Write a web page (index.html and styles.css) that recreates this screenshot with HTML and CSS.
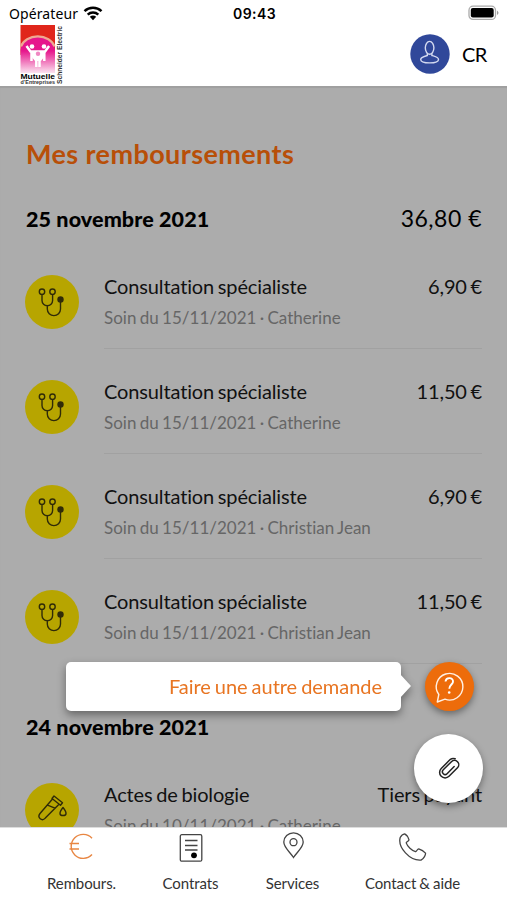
FILE: index.html
```html
<!DOCTYPE html>
<html lang="fr">
<head>
<meta charset="utf-8">
<title>Mes remboursements</title>
<link rel="stylesheet" href="styles.css">
</head>
<body>
<svg width="0" height="0" class="defs">
  <symbol id="stethoscope" viewBox="0 0 54 54">
    <g fill="none" stroke="currentColor" stroke-width="1.4">
      <circle cx="17" cy="16.700" r="2.700"/><circle cx="27.500" cy="16.700" r="2.700"/>
      <path d="M17 19.400v6a5.300 5.300 0 0 0 10.600 0v-6M22.300 31v3a6.600 6.600 0 0 0 13.200 0V25"/>
    </g>
    <circle cx="35.500" cy="24.500" r="3.200" fill="currentColor"/>
  </symbol>
</svg>
<div class="screen">
  <header class="top">
    <div class="status">
      <div class="carrier"><span>Opérateur</span>
        <svg width="20" height="15" viewBox="0 0 20 15"><g fill="none" stroke="#000" stroke-width="2.500"><path d="M1.500 5.200a12.500 12.500 0 0 1 17 0M4.700 8.600a7.800 7.800 0 0 1 10.600 0"/></g><path d="M6.800 10.800a5 5 0 0 1 6.400 0L10 14.200z"/></svg>
      </div>
      <time>09:43</time>
      <svg class="battery" width="32" height="16" viewBox="0 0 32 16"><rect x="1" y="1.200" width="26.500" height="13.200" rx="4" fill="#fff" stroke="#aaa" stroke-width="1.300"/><rect x="2.800" y="3" width="22.900" height="9.600" rx="2" /><path d="M29 5.500v4.600q3-2.300 0-4.600z" fill="#999"/></svg>
    </div>
    <div class="brandbar">
      <svg class="logo" width="46" height="62" viewBox="0 0 46 62">
        <defs><linearGradient id="pink" x2="0" y2="1"><stop offset=".4" stop-color="#e6168c"/><stop offset="1" stop-color="#fbe3f0"/></linearGradient></defs>
        <rect x="1.500" y="0" width="34.500" height="30" fill="#e0261b"/>
        <path d="M1.500 48V25a17.300 15 0 0 1 34.500 0v23z" fill="url(#pink)"/>
        <path d="M2 21.500a17.300 13.500 0 0 1 33.500 0" fill="none" stroke="#eea993" stroke-width="2.200"/>
        <g fill="#fff"><circle cx="13" cy="21.500" r="2.300"/><circle cx="25" cy="21.500" r="2.300"/></g>
        <path d="M7.500 21l4 5.500h14.600l4-5.500M12.500 26v10M25.300 26v10M17.300 34v8M20.500 34v8" fill="none" stroke="#fff" stroke-width="2.500"/>
        <path d="M12 26h14v5l-4 5h-6l-4-5z" fill="#fff"/><circle cx="19" cy="28.800" r="2.200" fill="#f087c2"/>
        <text x="1.500" y="54" font-size="6.500" textLength="34.500" lengthAdjust="spacingAndGlyphs" class="logo-name">Mutuelle</text>
        <text x="1.500" y="59.300" font-size="6.200" textLength="34.500" lengthAdjust="spacingAndGlyphs" class="logo-text">d’Entreprises</text>
        <text transform="translate(43 59) rotate(-90)" font-size="6.500" textLength="58" lengthAdjust="spacingAndGlyphs" class="logo-text">Schneider Electric</text>
      </svg>
      <div class="user">
        <svg width="40" height="40" viewBox="0 0 40 40"><circle cx="20" cy="20" r="19.700" fill="#30489a"/><g fill="none" stroke="#d4daf0" stroke-width="1.400"><ellipse cx="19.600" cy="13.800" rx="4.300" ry="6.400"/><path d="M17.300 19.300v2.200c-3.500 1-6.600 1.700-6.600 3.900 0 4.600 17.800 4.600 17.800 0 0-2.200-3-2.900-6.600-3.900v-2.200"/></g></svg>
        <span>CR</span>
      </div>
    </div>
  </header>
  <main class="content">
    <h1>Mes remboursements</h1>
    <section>
      <div class="day"><h2>25 novembre 2021</h2><span class="total">36,80 €</span></div>
      <article class="row"><svg class="badge"><use href="#stethoscope"/></svg><div class="detail"><div class="line"><h3>Consultation spécialiste</h3><span class="amount">6,90 €</span></div><p>Soin du 15/11/2021 · Catherine</p></div></article>
      <article class="row"><svg class="badge"><use href="#stethoscope"/></svg><div class="detail"><div class="line"><h3>Consultation spécialiste</h3><span class="amount">11,50 €</span></div><p>Soin du 15/11/2021 · Catherine</p></div></article>
      <article class="row"><svg class="badge"><use href="#stethoscope"/></svg><div class="detail"><div class="line"><h3>Consultation spécialiste</h3><span class="amount">6,90 €</span></div><p>Soin du 15/11/2021 · Christian Jean</p></div></article>
      <article class="row"><svg class="badge"><use href="#stethoscope"/></svg><div class="detail"><div class="line"><h3>Consultation spécialiste</h3><span class="amount">11,50 €</span></div><p>Soin du 15/11/2021 · Christian Jean</p></div></article>
    </section>
    <section class="next">
      <div class="day"><h2>24 novembre 2021</h2></div>
      <article class="row"><svg class="badge" viewBox="0 0 54 54"><g fill="none" stroke="currentColor" stroke-width="1.400" stroke-linejoin="round"><path d="M27 15.500l2-2.500 8.500 6.700-2 2.500zM27.500 16L15 30.500c-3.200 4.200 2 8.200 5.300 4.600L34 21.200M22.500 22.200l7.500 3"/><path d="M38 24.500c-4.500 5.500-3.500 8 0 8s4.500-2.500 0-8z"/></g></svg><div class="detail"><div class="line"><h3>Actes de biologie</h3><span class="amount">Tiers payant</span></div><p>Soin du 10/11/2021 · Catherine</p></div></article>
    </section>
    <div class="tip">Faire une autre demande</div>
    <button class="help" aria-label="Aide"><svg width="49" height="49" viewBox="0 0 49 49"><path d="M12.300 40l1.500-7.500A13.300 13.300 0 1 1 20 37.200z" fill="none" stroke="#fff0e4" stroke-width="1.400" stroke-linejoin="round"/><path d="M20.500 19.500c.5-4.800 8-4.300 7.500.3-.3 2.700-3.600 3-3.700 7" fill="none" stroke="#fff" stroke-width="1.900"/><circle cx="24.200" cy="30.500" r="1.300" fill="#fff"/></svg></button>
    <button class="attach" aria-label="Joindre"><svg width="69" height="69" viewBox="0 0 69 69"><path transform="translate(35 34.500) rotate(45)" d="M-5.500-5V5.500a5.500 5.500 0 0 0 11 0V-6.500a4.300 4.300 0 0 0-8.600 0V5a2.700 2.700 0 0 0 5.400 0V-5M-5.500-5V-7.500a7.500 5.500 0 0 1 3-3.700" fill="none" stroke="#222" stroke-width="1.500" stroke-linecap="round"/></svg></button>
  </main>
  <nav class="tabs">
    <a class="tab active"><svg width="30" height="32" viewBox="0 0 30 32"><path d="M25 8.200A12 12 0 1 0 25 24.500M2.500 13.500h9.500M2.500 19h9.500" fill="none" stroke="currentColor" stroke-width="1.400"/></svg><span>Rembours.</span></a>
    <a class="tab"><svg width="30" height="32" viewBox="0 0 30 32"><g fill="none" stroke="currentColor" stroke-width="1.300"><rect x="4.300" y="4.700" width="21.500" height="26.500" rx="1.500"/><path d="M9 10.500h12.500M9 15.500h12.500M9 20h12.500"/></g><circle cx="18" cy="25.300" r="2.900"/></svg><span>Contrats</span></a>
    <a class="tab"><svg width="30" height="32" viewBox="0 0 30 32"><g fill="none" stroke="currentColor" stroke-width="1.300"><path d="M15.500 27.500C12 22 5.800 17.500 5.800 12a9.700 9.200 0 0 1 19.400 0c0 5.500-6.200 10-9.700 15.500z"/><circle cx="15.500" cy="12.200" r="3.500"/></g></svg><span>Services</span></a>
    <a class="tab"><svg width="30" height="32" viewBox="0 0 30 32"><path d="M2.200 7.500c1-2 3-3.400 4.500-3.600 2 1 3.500 3.500 4.300 6-.3 1.500-2.400 1.700-2.800 3 1.300 3.800 5.500 7.600 9.300 8.800 1.500-.5 1.700-2.700 3.200-2.800 2.500.8 5 2.200 6.800 4.200.3 1.700-1.500 5.500-4.500 7C12 31-.5 17.500 2.200 7.500z" fill="none" stroke="currentColor" stroke-width="1.300"/></svg><span>Contact &amp; aide</span></a>
  </nav>
</div>
</body>
</html>
```

FILE: styles.css
```css
* { box-sizing: border-box; margin: 0; }
body { font-family: Lato, sans-serif; color: #000; font-variant-ligatures: none; }
svg { display: block; flex: none; }
.defs { position: absolute; }
.screen { width: 507px; height: 900px; display: flex; flex-direction: column; overflow: hidden; background: #fff; }
.top { height: 86px; flex: none; }
.status { height: 25px; padding: 2px 7px 0 9px; display: grid; grid-template-columns: 1fr auto 1fr; align-items: center; font-family: Inter, sans-serif; font-size: 14px; }
.carrier { display: flex; align-items: center; gap: 5px; font-family: "Noto Sans", sans-serif; letter-spacing: .1px; }
.status time { font-weight: 600; letter-spacing: .4px; }
.battery { justify-self: end; margin-top: -1px; }
.brandbar { display: flex; justify-content: space-between; padding: 0 20px 0 19px; }
.logo-name { font-family: "Liberation Sans", sans-serif; font-weight: bold; }
.logo-text { font-family: "Liberation Sans", sans-serif; font-weight: bold; fill: #333; }
.user { height: 40px; margin-top: 9px; display: flex; align-items: center; gap: 12px; font-size: 20px; letter-spacing: -.4px; }
.content { flex: 1; min-height: 0; position: relative; overflow: hidden; background: #acacac; padding: 50px 25px 0; box-shadow: inset 0 2px 1px #9f9f9f; }
h1 { color: #b84f08; font-size: 27px; font-weight: 700; line-height: 36px; height: 59px; letter-spacing: .4px; padding-left: 1px; }
.day { height: 48.5px; display: flex; align-items: center; justify-content: space-between; }
h2 { font-size: 21.5px; font-weight: 900; letter-spacing: .1px; padding-left: 1px; }
.total { font-size: 23px; letter-spacing: .5px; line-height: 28px; margin-top: -3px; }
.next { margin-top: 39.5px; }
.row { height: 105px; display: grid; grid-template-columns: 54px 1fr; column-gap: 25px; padding-top: 31px; }
.badge { width: 54px; height: 54px; border-radius: 50%; background: #b7a500; color: #302b08; }
.detail { height: 74px; border-bottom: 1px solid #a1a1a1; }
.line { display: flex; justify-content: space-between; line-height: 26px; margin-top: -1.5px; }
h3, .amount { font-size: 20px; font-weight: 400; color: #111; letter-spacing: -.13px; word-spacing: -1.3px; }
.detail p { font-size: 17px; line-height: 24px; margin-top: 7px; color: #666; letter-spacing: .02px; word-spacing: -1.1px; }
.tip { position: absolute; left: 66px; top: 576px; width: 335px; height: 49px; padding-right: 19px; border-radius: 5px; background: #fff; color: #e87522; font-size: 20px; line-height: 49px; letter-spacing: -.03px; word-spacing: -1.1px; text-align: right; filter: drop-shadow(0 4px 4px #0006); }
.tip::after { content: ""; position: absolute; left: 334px; top: 12px; border: 12px solid transparent; border-left: 11px solid #fff; border-right: 0; }
.help, .attach { position: absolute; padding: 0; border: 0; border-radius: 50%; box-shadow: 0 3px 7px #0006; }
.help { left: 425px; top: 576px; width: 49px; height: 49px; background: #ed6c0b; }
.attach { left: 414px; top: 648px; width: 69px; height: 69px; background: #fff; }
.tabs { height: 73px; flex: none; display: flex; background: #fff; padding: 2px 0 0 27px; border-top: 1px solid #ddd; }
.tab { width: 109px; flex: none; display: flex; flex-direction: column; align-items: center; gap: 11px; color: #444; font-size: 15px; line-height: 20px; letter-spacing: -.1px; word-spacing: -.6px; }
.tab:nth-child(3) { width: 95px; }
.tab:nth-child(4) { width: 145px; }
.tab span { color: #333; }
.active svg { color: #e88642; }
```
